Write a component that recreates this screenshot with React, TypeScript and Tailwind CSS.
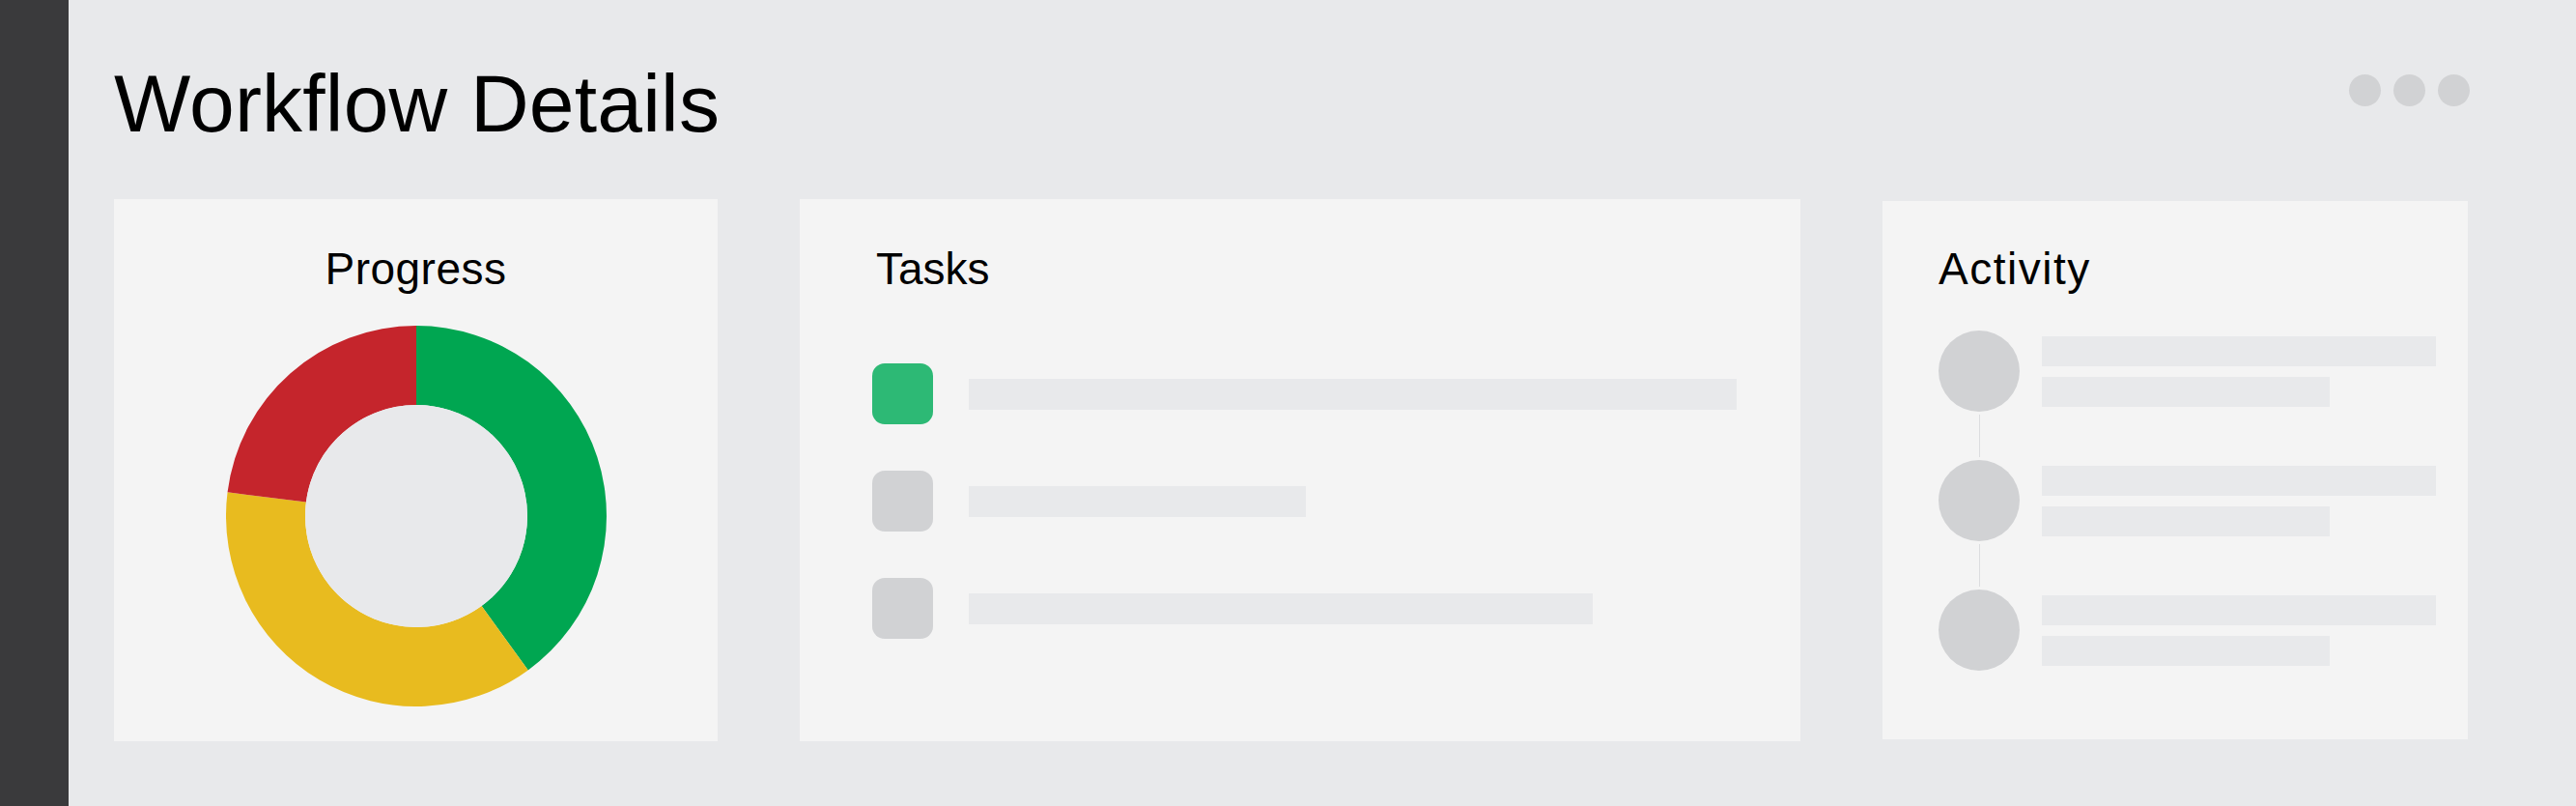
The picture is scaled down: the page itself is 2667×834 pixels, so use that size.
import React from 'react'

const segments = [
  { value: 40, color: '#00a651' },
  { value: 37, color: '#e8bb1f' },
  { value: 23, color: '#c5252c' },
]

function arcPath(cx: number, cy: number, R: number, r: number, a0: number, a1: number) {
  // angles in degrees, 0 = 12 o'clock, clockwise
  const pt = (rad: number, a: number) => {
    const t = ((a - 90) * Math.PI) / 180
    return [cx + rad * Math.cos(t), cy + rad * Math.sin(t)]
  }
  const large = a1 - a0 > 180 ? 1 : 0
  const [x0, y0] = pt(R, a0)
  const [x1, y1] = pt(R, a1)
  const [x2, y2] = pt(r, a1)
  const [x3, y3] = pt(r, a0)
  return `M${x0} ${y0} A${R} ${R} 0 ${large} 1 ${x1} ${y1} L${x2} ${y2} A${r} ${r} 0 ${large} 0 ${x3} ${y3} Z`
}

function Donut() {
  let start = 0
  return (
    <svg width="394" height="394" viewBox="0 0 394 394" className="mx-auto block">
      {segments.map((s, i) => {
        const end = start + (s.value / 100) * 360
        const d = arcPath(197, 197, 197, 115, start, end)
        start = end
        return <path key={i} d={d} fill={s.color} />
      })}
      <circle cx="197" cy="197" r="115" fill="#e8e9eb" />
    </svg>
  )
}

const tasks = [
  { done: true, width: 795 },
  { done: false, width: 349 },
  { done: false, width: 646 },
]

export default function App() {
  return (
    <div className="flex h-[834px] w-[2667px] overflow-hidden bg-[#e8e9eb] font-['Liberation_Sans',Arial,sans-serif] text-black">
      {/* Sidebar */}
      <div className="w-[71px] shrink-0 bg-[#3a3a3c]" />

      <div className="flex flex-1 flex-col pl-[47px] pr-[110px] pt-[65px]">
        {/* Header */}
        <div className="flex items-start justify-between">
          <h1 className="text-[84px] leading-none tracking-[0.2px]">Workflow Details</h1>
          <div className="mt-[12px] flex gap-[13px]">
            <span className="h-[33px] w-[33px] rounded-full bg-[#d1d2d4]" />
            <span className="h-[33px] w-[33px] rounded-full bg-[#d1d2d4]" />
            <span className="h-[33px] w-[33px] rounded-full bg-[#d1d2d4]" />
          </div>
        </div>

        {/* Panels */}
        <div className="mt-[57px] mr-[2px] flex items-center gap-[85px]">
          {/* Progress */}
          <div className="h-[561px] w-[625px] shrink-0 bg-[#f4f4f4] pt-[49px]">
            <h2 className="text-center text-[46px] leading-none tracking-[0.5px]">Progress</h2>
            <div className="mt-[36px]">
              <Donut />
            </div>
          </div>

          {/* Tasks */}
          <div className="h-[561px] w-[1036px] shrink-0 bg-[#f4f4f4] pl-[75px] pt-[49px]">
            <h2 className="ml-[4px] text-[46px] leading-none">Tasks</h2>
            <div className="mt-[75px] flex flex-col gap-[48px]">
              {tasks.map((t, i) => (
                <div key={i} className="flex items-center gap-[37px]">
                  <div
                    className={`h-[63px] w-[63px] rounded-[13px] ${t.done ? 'bg-[#2db975]' : 'bg-[#d1d2d4]'}`}
                  />
                  <div className="h-[32px] bg-[#e8e9eb]" style={{ width: t.width }} />
                </div>
              ))}
            </div>
          </div>

          {/* Activity */}
          <div className="h-[557px] flex-1 bg-[#f4f4f4] pl-[58px] pt-[47px]">
            <h2 className="text-[46px] leading-none tracking-[1.5px]">Activity</h2>
            <div className="mt-[41px] flex flex-col">
              {[0, 1, 2].map((i) => (
                <React.Fragment key={i}>
                  {i > 0 && (
                    <div className="flex h-[50px] w-[84px] justify-center py-[3px]">
                      <div className="w-px bg-[#dcdddf]" />
                    </div>
                  )}
                  <div className="flex items-center gap-[23px]">
                    <div className="h-[84px] w-[84px] shrink-0 rounded-full bg-[#d1d2d4]" />
                    <div className="flex flex-col gap-[11px]">
                      <div className="h-[31px] w-[408px] bg-[#e8e9eb]" />
                      <div className="h-[31px] w-[298px] bg-[#e8e9eb]" />
                    </div>
                  </div>
                </React.Fragment>
              ))}
            </div>
          </div>
        </div>
      </div>
    </div>
  )
}
